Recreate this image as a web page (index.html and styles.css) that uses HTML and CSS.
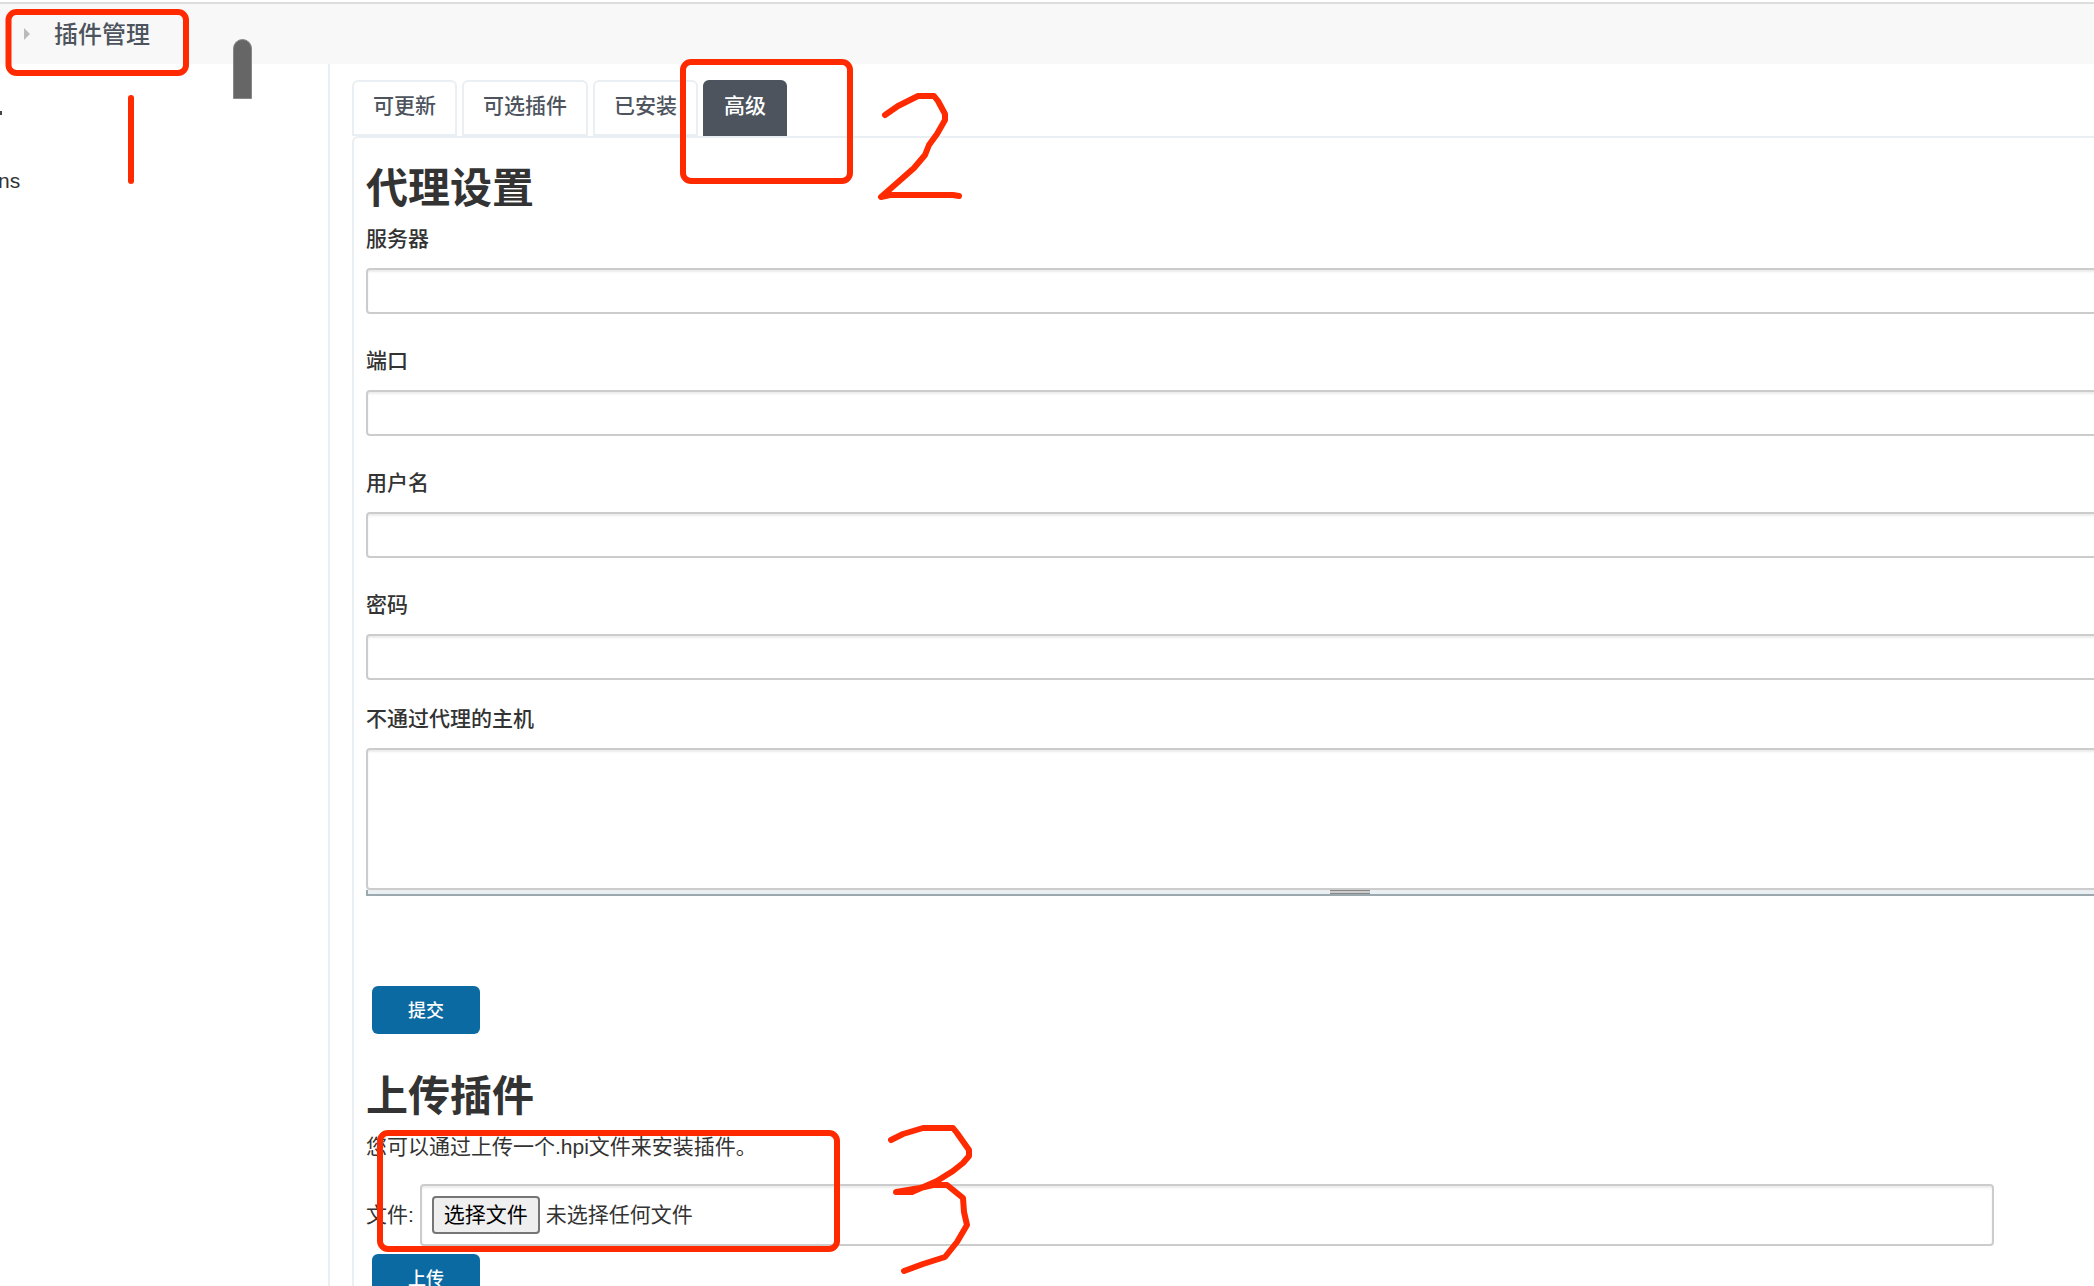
FILE: index.html
```html
<!doctype html>
<html lang="zh-CN">
  <head>
    <meta charset="UTF-8" />
    <meta name="viewport" content="width=device-width, initial-scale=1.0" />
    <title>插件管理</title>
    <link rel="stylesheet" href="styles.css">
  </head>
  <body>
    <header class="breadcrumb">
      <span class="caret"></span>
      <a class="breadcrumb-link" href="#">插件管理</a>
    </header>

    <div class="layout">
      <nav class="sidebar">
        <span class="side-mark"></span>
        <a class="side-link" href="#">ns</a>
      </nav>

      <main class="main">
        <div class="tabs">
          <a class="tab" href="#">可更新</a>
          <a class="tab" href="#">可选插件</a>
          <a class="tab" href="#">已安装</a>
          <a class="tab active" href="#">高级</a>
        </div>

        <div class="panel">
          <h1>代理设置</h1>
          <form class="proxy-form">
            <div class="field">
              <label for="server">服务器</label>
              <input id="server" type="text">
            </div>
            <div class="field">
              <label for="port">端口</label>
              <input id="port" type="text">
            </div>
            <div class="field">
              <label for="user">用户名</label>
              <input id="user" type="text">
            </div>
            <div class="field last">
              <label for="password">密码</label>
              <input id="password" type="password">
            </div>
            <div class="field">
              <label for="hosts">不通过代理的主机</label>
              <textarea id="hosts"></textarea>
              <div class="resizer"><span class="grip"></span></div>
            </div>
            <button class="button submit" type="submit">提交</button>
          </form>

          <h1>上传插件</h1>
          <p>您可以通过上传一个.hpi文件来安装插件。</p>
          <form class="upload-form">
            <div class="file-row">
              <label for="file">文件:</label>
              <label class="file-box">
                <input id="file" class="file-input" type="file">
                <span class="file-button">选择文件</span>
                <span>未选择任何文件</span>
              </label>
            </div>
            <button class="button" type="submit">上传</button>
          </form>
        </div>
      </main>
    </div>

    <span class="scroll-thumb"></span>

    <!-- hand-drawn step marks -->
    <svg class="marks" width="1000" height="1286" viewBox="0 0 1000 1286" aria-hidden="true">
      <rect x="8.5" y="12" width="177.500" height="61" rx="8" />
      <path d="M131 98V181" />
      <rect x="683" y="62" width="167" height="119" rx="8" />
      <path d="M885 115L898 106L918 96H934L938 101L945 114V120L937 134L929 145L925 155L914 168L897 183L881 197L890 195H953L959 196" />
      <rect x="380" y="1133" width="457" height="116" rx="8" />
      <path d="M891 1140L903 1134L923 1128H953L957 1133L969 1150V1156L963 1163L953 1171L937 1181L912 1192H896L920 1188L933 1185H947L963 1198L964 1212L967 1225L957 1242L945 1257L923 1264L904 1271" />
    </svg>
  </body>
</html>
```

FILE: styles.css
```css
* {
  box-sizing: border-box;
}
body {
  position: relative;
  margin: 0;
  padding-top: 2px;
  height: 100vh;
  overflow: hidden;
  background: #fff;
  color: #333;
  font-family: "Liberation Sans", "Noto Sans CJK SC", sans-serif;
  font-size: 21px;
  line-height: 30px;
}
a {
  color: inherit;
  text-decoration: none;
}
.breadcrumb {
  display: flex;
  align-items: center;
  gap: 24px;
  height: 62px;
  padding: 2px 24px 0;
  border-top: 2px solid #ddd;
  background: #f8f8f8;
}
.caret {
  margin-bottom: 2px;
  border: 6px solid transparent;
  border-left-color: #bbb;
  border-right: 0;
}
.breadcrumb-link {
  color: #4d545d;
  font-size: 24px;
  font-weight: 500;
}
.layout {
  display: flex;
  align-items: stretch;
}
.sidebar {
  flex: none;
  width: 330px;
  min-height: calc(100vh - 64px);
  padding-top: 47px;
  border-right: 2px solid #e9eff3;
}
.side-mark {
  display: block;
  width: 2px;
  height: 4px;
  margin-bottom: 51px;
  background: #444;
}
.side-link {
  display: block;
  margin-left: -2px;
  font-weight: 500;
}
.main {
  flex: 1;
  min-width: 0;
  padding: 16px 0 0 22px;
  overflow: hidden;
}
.tabs {
  display: flex;
  gap: 5px;
}
.tab {
  height: 56px;
  padding: 9px 19px;
  border: 2px solid #e9eff3;
  border-radius: 6px 6px 0 0;
  color: #4d545d;
  font-weight: 500;
}
.tab.active {
  border-color: #4d545d;
  background: #4d545d;
  color: #fff;
}
.panel {
  padding: 24px 0 20px 12px;
  border: 2px solid #e9eff3;
  border-width: 2px 0 0 2px;
  border-radius: 6px 0 0 0;
}
h1 {
  margin: 0 0 8px;
  font-size: 42px;
  font-weight: 700;
  line-height: 54px;
}
p {
  margin: 0 0 22px;
}
/* the form is wider than the window, the right end is cut off */
.proxy-form {
  width: calc(100% + 240px);
  margin-bottom: 36px;
}
.field {
  margin-bottom: 32px;
}
.field.last {
  margin-bottom: 24px;
}
.field label {
  display: block;
  margin-bottom: 14px;
  font-weight: 500;
}
.field input,
.field textarea {
  display: block;
  width: 100%;
  height: 46px;
  padding: 6px 12px;
  border: 2px solid #ccc;
  border-radius: 4px;
  box-shadow: inset 0 2px 2px rgba(0, 0, 0, 0.075);
  background: #fff;
  font: inherit;
}
.field textarea {
  height: 142px;
  resize: none;
}
.resizer {
  display: flex;
  justify-content: center;
  height: 6px;
  border: 2px solid #9ba8ae;
  border-top: 0;
  background: #e9eff3;
}
.grip {
  width: 40px;
  height: 4px;
  border: 1px solid #888;
  border-width: 1px 0;
  background: #ccc;
}
.button {
  display: block;
  width: 108px;
  height: 48px;
  margin-left: 6px;
  padding: 0 0 2px;
  border: 0;
  border-radius: 6px;
  background: #0b6aa2;
  color: #fff;
  font-family: inherit;
  font-size: 18px;
  font-weight: 500;
}
.submit {
  margin-top: 90px;
}
.file-row {
  display: flex;
  align-items: center;
  gap: 6px;
  margin: 0 100px 8px 0;
}
.file-box {
  position: relative;
  display: flex;
  flex: 1;
  align-items: center;
  gap: 6px;
  height: 62px;
  padding: 0 10px;
  border: 2px solid #ccc;
  border-radius: 4px;
  box-shadow: inset 0 2px 2px rgba(0, 0, 0, 0.075);
}
.file-input {
  position: absolute;
  inset: 0;
  width: 100%;
  opacity: 0;
}
.file-button {
  padding: 2px 10px;
  border: 2px solid #767676;
  border-radius: 4px;
  background: #efefef;
  color: #000;
}
.scroll-thumb {
  position: absolute;
  top: 39px;
  left: 233px;
  width: 19px;
  height: 60px;
  border: 1px solid #888;
  border-radius: 10px 10px 0 0;
  background: #666;
}
.marks {
  position: absolute;
  top: 0;
  left: 0;
  fill: none;
  stroke: #ff2a00;
  stroke-width: 6;
  stroke-linecap: round;
  stroke-linejoin: round;
  pointer-events: none;
}
```
